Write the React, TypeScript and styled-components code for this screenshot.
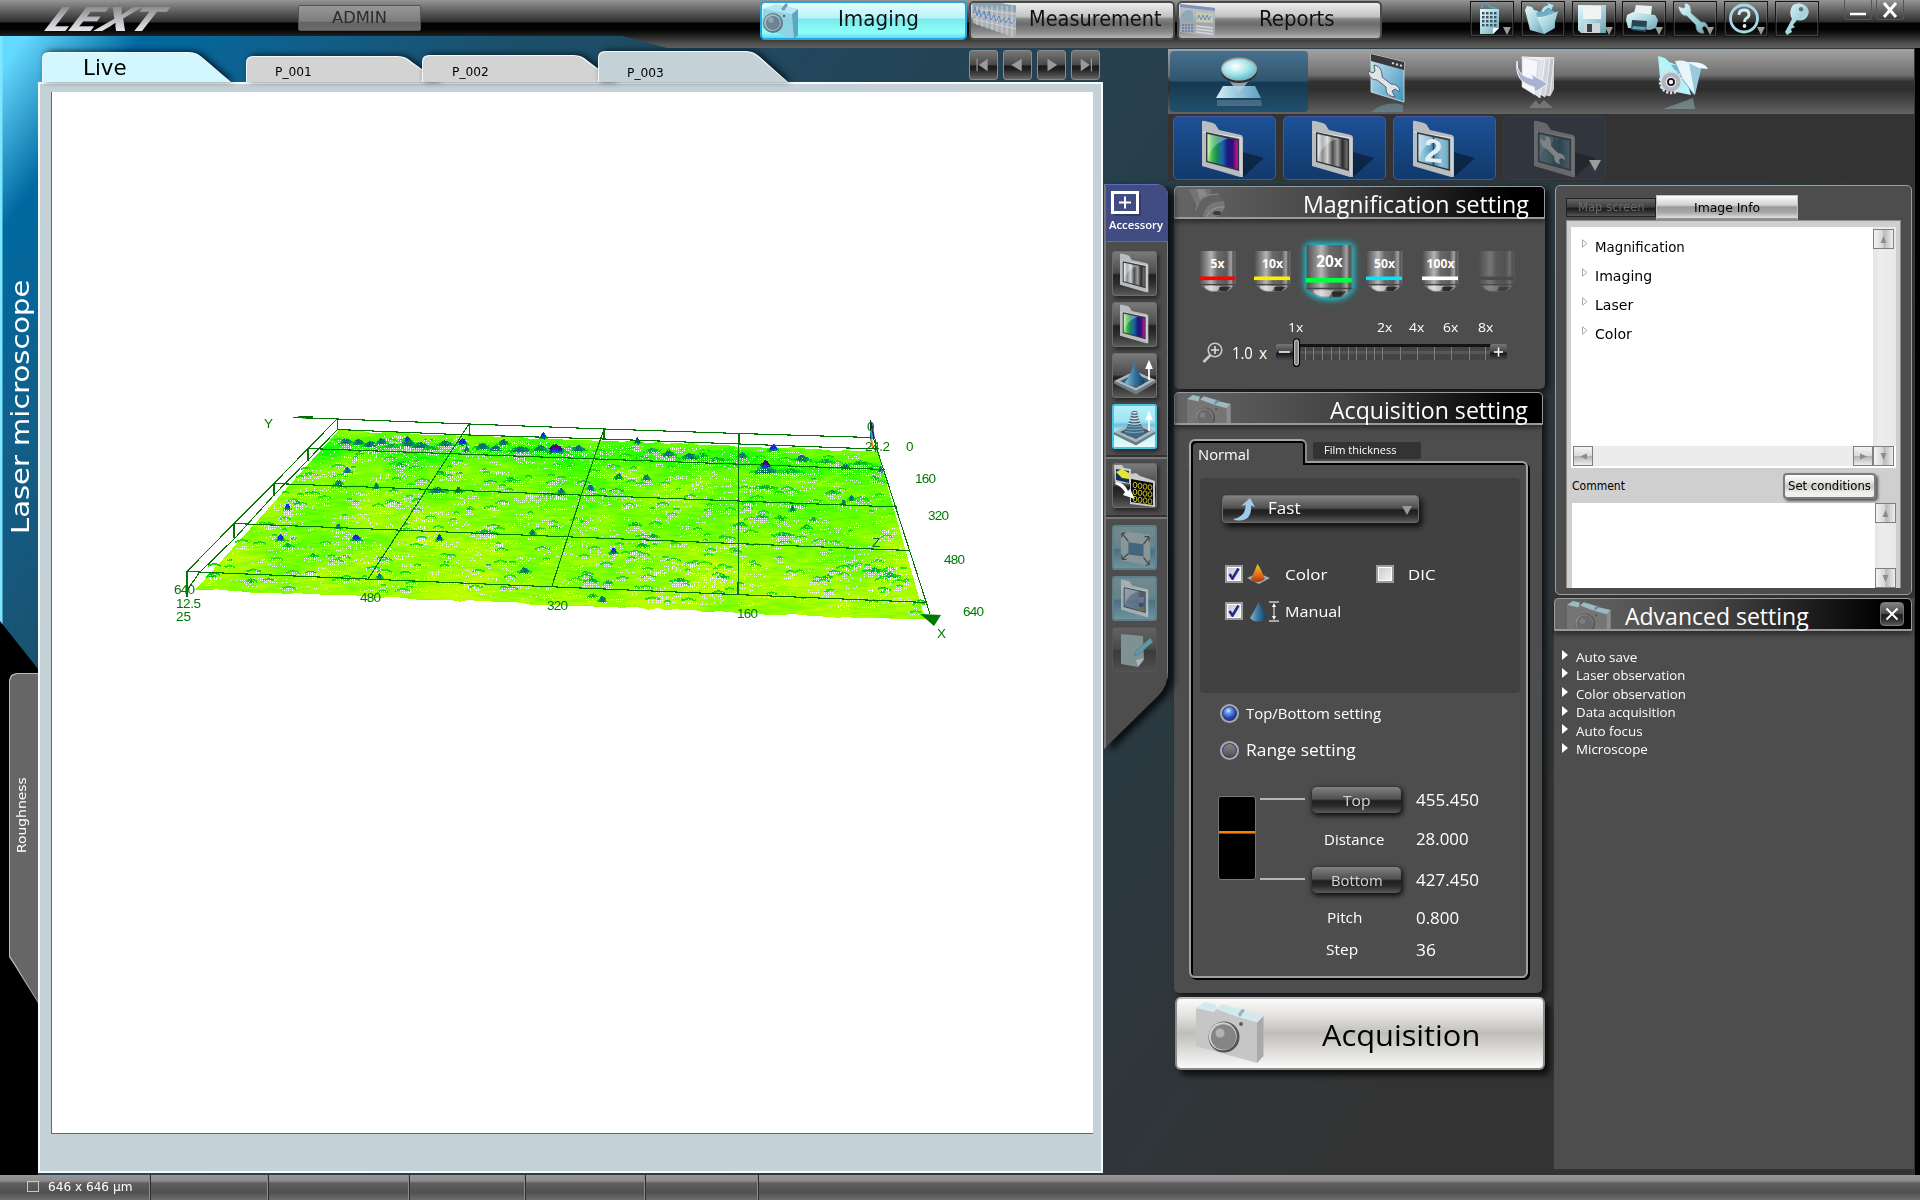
import React, { useEffect, useLayoutEffect, useRef, useState } from "react";
import styled, { createGlobalStyle, css } from "styled-components";

const segoe = `"Open Sans", "Noto Sans", sans-serif`;
const tahoma = `"DejaVu Sans Condensed", "DejaVu Sans", "Noto Sans", sans-serif`;

const GlobalStyle = createGlobalStyle`
  * { box-sizing: border-box; }
  body { margin: 0; background: #000; overflow: hidden; }
  svg { display: block; flex: none; }
`;

/* ---------- text that keeps a fixed run length ---------- */

const FitBox = styled.span<{ $w: number; $size: number; $font?: string; $color?: string; $vertical?: boolean; $weight?: number }>`
  display: inline-flex;
  flex: none;
  align-items: flex-start;
  width: ${(p) => (p.$vertical ? "auto" : p.$w + "px")};
  height: ${(p) => (p.$vertical ? p.$w + "px" : "auto")};
  font: ${(p) => p.$weight || 400} ${(p) => p.$size}px/1.2 ${(p) => p.$font || segoe};
  color: ${(p) => p.$color || "#fff"};
  white-space: nowrap;
  ${(p) => p.$vertical && css`writing-mode: vertical-rl; transform: rotate(180deg);`}
`;
const FitInner = styled.span`
  flex: none;
  transform-origin: 0 0;
`;

type FitProps = { w: number; size: number; font?: string; color?: string; vertical?: boolean; weight?: number; children: string };

function Fit({ w, size, font, color, vertical, weight, children }: FitProps) {
  const ref = useRef<HTMLSpanElement>(null);
  const [scale, setScale] = useState(1);
  useLayoutEffect(() => {
    const el = ref.current;
    if (!el) return;
    const natural = vertical ? el.offsetHeight : el.offsetWidth;
    if (natural) setScale(w / natural);
  }, [w, vertical, children]);
  return (
    <FitBox $w={w} $size={size} $font={font} $color={color} $vertical={vertical} $weight={weight}>
      <FitInner ref={ref} style={{ transform: vertical ? `scaleY(${scale})` : `scaleX(${scale})` }}>{children}</FitInner>
    </FitBox>
  );
}

/* ---------- shell ---------- */

const Screen = styled.div`
  width: 1920px;
  height: 1200px;
  display: flex;
  flex-direction: column;
  background: #000;
  overflow: hidden;
`;

const Header = styled.header`
  z-index: 2;
  flex: none;
  height: 48px;
  margin-bottom: -12px;
  display: flex;
  align-items: flex-start;
  background: linear-gradient(#959595 0, #5c5c5c 12px, #2e2e2e 22px, #000 23px, #050505 30px, #1c1c1c 35px, #4d4d4d 43px, #5e5e5e 48px);
  clip-path: polygon(0 0, 100% 0, 100% 48px, 667px 48px, 622px 36px, 0 36px);
`;

const Logo = styled.div`
  margin: 7px 0 0 43px;
  width: 255px;
  height: 25px;
  font: 800 33px/25px Inter, "Liberation Sans", sans-serif;
  font-style: italic;
  letter-spacing: -1px;
  transform: scaleX(1.36) skewX(-22deg);
  transform-origin: 0 100%;
  background: linear-gradient(#8d8d90, #e9e9ee);
  -webkit-background-clip: text;
  background-clip: text;
  color: transparent;
`;

const AdminTag = styled.div`
  width: 123px;
  height: 26px;
  margin: 5px 339px 0 0;
  border: 1px solid #555;
  border-radius: 2px;
  background: linear-gradient(#979797 0, #7d7d7d 64%, #636363 66%, #6b6b6b 100%);
  display: flex;
  justify-content: center;
  padding-top: 2px;
`;

const TopTabs = styled.nav`
  display: flex;
  gap: 2px;
  margin-top: 1px;
`;
const TopTab = styled.div<{ $active?: boolean; $w: number }>`
  width: ${(p) => p.$w}px;
  height: 39px;
  display: flex;
  justify-content: space-between;
  border-radius: 5px;
  overflow: hidden;
  border: 2px solid ${(p) => (p.$active ? "#2aa3dc" : "#4a4a4a")};
  background: ${(p) =>
    p.$active
      ? "linear-gradient(#e4fcff 0, #b8f4fc 42%, #7be8ea 46%, #86f6f4 65%, #8dfff8 85%, #5fd8f2 100%)"
      : "linear-gradient(#eee 0, #c4c4c4 38%, #848484 46%, #6c6c6c 60%, #888 82%, #b5b5b5 100%)"};
`;
const TopTabLabel = styled.div<{ $r: number }>`
  padding: 4px ${(p) => p.$r}px 0 0;
`;

const Tools = styled.div`
  display: flex;
  gap: 6.8px;
  margin: 1px 0 0 88px;
`;
const ToolButton = styled.div`
  position: relative;
  width: 44px;
  height: 36px;
  border: 1px solid #161616;
  outline: 1px solid rgba(150, 150, 150, 0.3);
  outline-offset: -2px;
  display: flex;
  justify-content: center;
  align-items: center;
  padding-right: 4px;
`;
const Caret = styled.i`
  position: absolute;
  right: 2px;
  bottom: 1px;
  border: 4px solid transparent;
  border-top: 8px solid #9b9b9b;
  border-bottom: 0;
`;
const WindowKeys = styled.div`
  display: flex;
  gap: 4px;
  margin-left: 25px;
`;
const WindowKey = styled.div`
  width: 28px;
  height: 20px;
  border: 1px solid #555;
  border-top: 0;
  border-radius: 0 0 3px 3px;
  display: flex;
  justify-content: center;
  align-items: center;
`;

const Main = styled.main`
  flex: none;
  height: 1139px;
  display: flex;
  background: linear-gradient(126deg, #64daff 20px, #56c6ef 36px, #0069a0 116px, #10608c 240px, #1c4f6a 420px, #23465a 700px, #27404c 950px, #2b3941 1350px, #333 1750px);
  border-right: 5px solid #000;
`;

const Rail = styled.aside`
  width: 38px;
  flex: none;
  display: flex;
  flex-direction: column;
  background: linear-gradient(90deg, #7fe6ff 0, #7fe6ff 2px, transparent 3px);
`;
const RailTop = styled.div`
  height: 585px;
  flex: none;
  padding: 244px 0 0 7px;
`;
const RailBottom = styled.div`
  flex: 1;
  background: #000;
  clip-path: polygon(0 0, 100% 48px, 100% 100%, 0 100%);
  padding: 52px 0 0 9px;
`;
const RoughTab = styled.div`
  height: 331px;
  background: #b9b9b9;
  clip-path: polygon(0 7px, 2px 2px, 7px 0, 100% 0, 100% 330px, 4px 290px, 0 284px);
  padding: 1px 0 0 1px;
`;
const RoughFace = styled.div`
  height: 329px;
  background: #666;
  clip-path: polygon(0 7px, 2px 2px, 7px 0, 100% 0, 100% 328px, 4px 288px, 0 282px);
  padding: 103px 0 0 5px;
`;

const Viewer = styled.section`
  width: 1065px;
  flex: none;
  display: flex;
  flex-direction: column;
`;
const TabStrip = styled.div`
  height: 46px;
  flex: none;
  display: flex;
  align-items: flex-end;
  padding-left: 4px;
`;
const tabPath = (w: number, h: number) =>
  `path("M0 ${h} V7 Q0 0 7 0 H${w - 42} Q${w - 34} 0 ${w - 28} 6 L${w} ${h} Z")`;
const TabShadow = styled.div<{ $ml?: number }>`
  margin-left: ${(p) => p.$ml || 0}px;
  filter: drop-shadow(3px -1px 3px rgba(0, 10, 20, 0.75));
`;
const TabEdge = styled.div<{ $w: number; $h: number }>`
  width: ${(p) => p.$w}px;
  height: ${(p) => p.$h}px;
  background: #f4f8f9;
  clip-path: ${(p) => tabPath(p.$w, p.$h)};
  padding-top: 1px;
`;
const TabFace = styled.div<{ $w: number; $h: number; $bg: string; $l: number; $t: number }>`
  width: ${(p) => p.$w - 1}px;
  height: ${(p) => p.$h - 1}px;
  margin-left: 1px;
  background: ${(p) => p.$bg};
  clip-path: ${(p) => tabPath(p.$w - 2, p.$h - 1)};
  padding: ${(p) => p.$t}px 0 0 ${(p) => p.$l}px;
`;
const Pager = styled.div`
  display: flex;
  gap: 5px;
  margin: 0 0 2px 181px;
`;
const PagerKey = styled.div`
  width: 29px;
  height: 30px;
  border: 1px solid #8b8b8b;
  border-radius: 3px;
  background: linear-gradient(#777 0, #4a4a4a 48%, #1b1b1b 54%, #222 66%, #666 100%);
  display: flex;
  align-items: center;
  justify-content: center;
`;
const Frame = styled.div`
  height: 1091px;
  flex: none;
  background: #c4d1d6;
  border: 2px solid #f6fafb;
  padding: 8px 8px 37px 11px;
`;
const Canvas3D = styled.div`
  position: relative;
  height: 1042px;
  background: #fff;
  border-left: 1px solid #5e6a6f;
  border-bottom: 1px solid #5e6a6f;
`;
const Surface = styled.canvas`
  position: absolute;
  left: 138px;
  top: 328px;
`;
const Axes = styled.svg`
  position: absolute;
  left: 107px;
  top: 308px;
`;

/* ---------- accessory rail ---------- */

const AccessoryColumn = styled.aside`
  width: 65px;
  flex: none;
  padding: 148px 0 0 1px;
  filter: drop-shadow(6px 3px 3px rgba(0, 0, 0, 0.75));
`;
const AccessoryShape = styled.div`
  width: 64px;
  height: 565px;
  background: #4d4d4d;
  clip-path: path("M0 565 V0 H54 Q64 2 64 12 V487 Q64 502 54 512 Z");
  display: flex;
  flex-direction: column;
  align-items: center;
  border-left: 2px solid #777;
  border-right: 1px solid #808080;
  padding-right: 4px;
`;
const AccessoryHead = styled.div`
  width: 64px;
  height: 58px;
  flex: none;
  margin: 0 -4px 9px 0;
  background: #414d82;
  border: 1px solid #5a6cc0;
  border-radius: 0 10px 0 0;
  display: flex;
  flex-direction: column;
  align-items: flex-start;
  padding: 6px 0 0 5px;
`;
const HeadCaption = styled.div`
  margin: -1px 0 0 -2px;
`;
const SideButton = styled.div<{ $kind?: "active" | "soft" | "dim" }>`
  width: 45px;
  height: 45px;
  flex: none;
  margin-bottom: 6px;
  border-radius: 3px;
  display: flex;
  align-items: center;
  justify-content: center;
  overflow: hidden;
  border: 1px solid #6c6c6c;
  background: linear-gradient(#7a7a7a 0, #4c4c4c 48%, #202020 54%, #303030 75%, #5a5a5a 100%);
  box-shadow: 2px 3px 4px rgba(0, 0, 0, 0.5);
  ${(p) => p.$kind === "active" && css`
    border: 2px solid #4cc4e4;
    background: linear-gradient(#b5f0fb 0, #9fe4f4 38%, #6dc0dc 46%, #b8effa 62%, #e6fdff 100%);
  `}
  ${(p) => p.$kind === "soft" && css`
    border: 2px solid #5f7f8b;
    background: linear-gradient(#708b90 0, #668389 50%, #4c7082 56%, #70949c 100%);
    box-shadow: none;
  `}
  ${(p) => p.$kind === "dim" && css`
    border-color: #555;
    background: linear-gradient(#626262 0, #4a4a4a 48%, #3a3a3a 54%, #505050 100%);
    box-shadow: none;
  `}
`;
const Groove = styled.hr<{ $top: number; $bottom: number }>`
  width: 61px;
  height: 4px;
  flex: none;
  margin: ${(p) => p.$top}px -4px ${(p) => p.$bottom}px 0;
  border: 0;
  border-top: 2px solid #333;
  border-bottom: 2px solid #777;
`;

/* ---------- right side ---------- */

const Right = styled.section`
  width: 746px;
  flex: none;
  padding-top: 13px;
  display: flex;
  flex-direction: column;
`;
const ModeBar = styled.div`
  height: 65px;
  flex: none;
  display: flex;
  gap: 10px;
  padding: 2px;
  background: linear-gradient(#a2a2a2 0, #6f6f6f 40%, #333 50%, #2e2e2e 62%, #4c4c4c 84%, #646464 100%);
`;
const Mode = styled.div<{ $on?: boolean }>`
  width: 138px;
  height: 61px;
  border-radius: 4px;
  display: flex;
  justify-content: center;
  align-items: center;
  padding-top: 2px;
  background: ${(p) => (p.$on ? "linear-gradient(#46708e 0, #31566f 48%, #16384f 52%, #22506e 100%)" : "none")};
`;
const PresetBar = styled.div`
  height: 67px;
  flex: none;
  display: flex;
  gap: 7px;
  padding: 2px 5px 0;
  background: #333;
`;
const Preset = styled.div<{ $off?: boolean; $l?: number }>`
  position: relative;
  width: 103px;
  height: 64px;
  border: 1px solid ${(p) => (p.$off ? "#363d4a" : "#4a55a0")};
  border-radius: 5px;
  background: ${(p) => (p.$off ? "#30353e" : "linear-gradient(#1d5096, #113a6c)")};
  padding: 3px 0 0 ${(p) => p.$l || 28}px;
`;
const PresetCaret = styled(Caret)`
  right: 4px;
  bottom: 8px;
  border-width: 6px;
  border-top-width: 11px;
  border-bottom: 0;
`;
const Columns = styled.div`
  flex: 1;
  display: flex;
  gap: 9px;
  padding-left: 6px;
`;
const LeftColumn = styled.div`
  width: 371px;
  flex: none;
  padding-top: 5px;
  display: flex;
  flex-direction: column;
`;
const RightColumn = styled.div`
  width: 360px;
  flex: none;
  padding: 4px 0 6px;
  display: flex;
  flex-direction: column;
`;

const Panel = styled.section<{ $h: number; $w: number; $mb: number }>`
  width: ${(p) => p.$w}px;
  height: ${(p) => p.$h}px;
  flex: none;
  margin-bottom: ${(p) => p.$mb}px;
  background: #4d4d4d;
  border-radius: 5px;
  box-shadow: 4px 3px 6px rgba(0, 0, 0, 0.65);
`;
const PanelHead = styled.div<{ $w: number; $l: number }>`
  width: ${(p) => p.$w}px;
  height: 33px;
  border: 1px solid #9a9a9a;
  border-bottom-width: 2px;
  border-radius: 5px 5px 1px 1px;
  background: linear-gradient(90deg, #666 0, #444 45%, #000 92%);
  box-shadow: 0 3px 5px rgba(0, 0, 0, 0.45);
  display: flex;
  padding-left: ${(p) => p.$l}px;
`;
const HeadPicture = styled.div<{ $w: number }>`
  width: ${(p) => p.$w}px;
  height: 30px;
  flex: none;
  overflow: hidden;
  padding-top: 2px;
`;
const HeadTitle = styled.div`
  margin-top: 4px;
`;

const Objectives = styled.div`
  height: 57px;
  margin: 24px 0 0 25px;
  display: grid;
  grid-template-columns: 55px 49px 63px 56px 56px 40px;
  align-items: center;
`;
const Active = styled.div`
  width: 53px;
  display: flex;
  justify-content: center;
  filter: drop-shadow(0 0 3px #1ec8d8) drop-shadow(0 0 3px #17b4c4);
`;
const ZoomLabels = styled.div`
  display: grid;
  grid-template-columns: 89px 32px 34px 35px 20px;
  margin: 18px 0 0 114px;
  height: 20px;
  align-items: center;
`;
const ZoomRow = styled.div`
  display: flex;
  align-items: center;
  height: 30px;
  margin: 0 0 0 28px;
`;
const Spacer = styled.span<{ $w: number }>`
  width: ${(p) => p.$w}px;
  flex: none;
`;

const Notebook = styled.div`
  margin: 14px 0 0 15px;
`;
const NotebookTabs = styled.div`
  display: flex;
  height: 22px;
`;
const NormalTab = styled.div`
  z-index: 1;
  width: 118px;
  height: 28px;
  border: 2px solid #a6a6a6;
  border-right-color: #8a8a8a;
  border-bottom: 0;
  border-radius: 6px 6px 0 0;
  background: #4d4d4d;
  box-shadow: inset 2px 2px 0 #000, inset -2px 0 0 #000;
  clip-path: polygon(0 0, 100% 0, 100% 24px, 114px 24px, 114px 28px, 0 28px);
  padding: 5px 0 0 7px;
`;
const FilmTab = styled.div`
  width: 108px;
  height: 17px;
  margin: 3px 0 0 6px;
  border-radius: 2px;
  background: #333;
  display: flex;
  align-items: center;
  padding: 0 0 2px 11px;
`;
const NotebookBody = styled.div`
  width: 339px;
  height: 517px;
  border: 2px solid #a0a0a0;
  border-radius: 0 6px 6px 6px;
  box-shadow: 2px 2px 0 #000, inset 2px 2px 0 #000;
  padding: 15px 0 0 9px;
`;
const ScanBox = styled.div`
  width: 320px;
  height: 215px;
  border-radius: 4px;
  background: #414141;
  padding: 17px 0 0 22px;
`;
const gloss = css`
  background: linear-gradient(#828282 0, #4f4f4f 46%, #1f1f1f 54%, #2a2a2a 72%, #585858 100%);
`;
const Dropdown = styled.div`
  width: 197px;
  height: 28px;
  border-radius: 4px;
  ${gloss}
  border: 1px solid #6a6a6a;
  box-shadow: 3px 4px 6px rgba(0, 0, 0, 0.8);
  display: flex;
  align-items: center;
  padding: 0 0 1px 9px;
  gap: 12px;
`;
const DropCaret = styled.i`
  margin: 4px 0 0 89px;
  border: 5px solid transparent;
  border-top: 9px solid #999;
  border-bottom: 0;
`;
const CheckRow = styled.div<{ $mt: number }>`
  display: flex;
  align-items: center;
  height: 20px;
  margin: ${(p) => p.$mt}px 0 0 3px;
`;
const Check = styled.div`
  width: 18px;
  height: 18px;
  border: 2px solid #9b9b9b;
  outline: 1px solid #fff;
  outline-offset: -3px;
  background: linear-gradient(135deg, #c5c5ce, #f6f6f6);
  display: flex;
  align-items: center;
  justify-content: center;
`;
const RadioRow = styled.div`
  height: 37px;
  display: flex;
  align-items: center;
  padding-left: 20px;
  gap: 7px;
`;
const Radios = styled.div`
  padding-top: 2px;
`;
const Radio = styled.div<{ $on?: boolean }>`
  width: 19px;
  height: 19px;
  border-radius: 50%;
  border: 2px solid #a9a9a9;
  background: ${(p) =>
    p.$on
      ? "radial-gradient(circle at 42% 32%, #d4f2ff 0, #6fa4ee 18%, #2a3fae 55%, #141c66 100%)"
      : "linear-gradient(#8b8584 0, #6a6464 60%, #4c4a4c 100%)"};
  box-shadow: inset 0 0 0 1px #2b3a77;
`;
const Measures = styled.div`
  display: grid;
  grid-template-columns: 42px 52px 89px 15px 70px;
  grid-template-rows: 40px 40px 40px 36px 30px;
  margin: 11px 0 0 18px;
  align-items: center;
`;
const Gauge = styled.div`
  grid-row: 1 / 4;
  grid-column: 1;
  align-self: start;
  width: 38px;
  height: 84px;
  margin-top: 16px;
  background: #000;
  border: 1px solid #777;
  border-radius: 3px;
  padding-top: 34px;
`;
const GaugeMark = styled.div`
  height: 3px;
  background: #ff7f00;
  border: 1px solid #8c4400;
  border-width: 0 0 1px;
`;
const Lead = styled.div<{ $row: number }>`
  grid-row: ${(p) => p.$row};
  grid-column: 2;
  width: 45px;
  height: 2px;
  margin-bottom: 3px;
  background: #b5b5b5;
`;
const Cell = styled.div<{ $row: number; $col: number; $l?: number; $b?: number }>`
  grid-row: ${(p) => p.$row};
  grid-column: ${(p) => p.$col};
  padding-left: ${(p) => p.$l || 0}px;
  padding-bottom: ${(p) => p.$b || 0}px;
  display: flex;
`;
const KeyButton = styled.div<{ $row: number }>`
  grid-row: ${(p) => p.$row};
  grid-column: 3;
  width: 89px;
  height: 26px;
  border-radius: 5px;
  ${gloss}
  box-shadow: 1px 2px 5px 1px rgba(0, 0, 0, 0.8);
  display: flex;
  justify-content: center;
  align-items: center;
  padding-top: 1px;
`;
const AcquireButton = styled.div`
  width: 370px;
  height: 73px;
  margin-left: 1px;
  flex: none;
  border-radius: 6px;
  border: 2px solid #8c8c8c;
  border-top-color: #bbb;
  background: linear-gradient(#fbfbfa 0, #e2e1df 25%, #c0beb9 50%, #dddcd9 75%, #fafaf9 100%);
  box-shadow: 5px 5px 6px rgba(0, 0, 0, 0.75);
  display: flex;
  padding: 3px 0 0 19px;
`;
const AcquireLabel = styled.div`
  margin: 15px 0 0 58px;
`;

/* image info */

const InfoPanel = styled.section`
  width: 357px;
  height: 410px;
  flex: none;
  margin: 0 0 3px 1px;
  border: 1px solid #9d9d9d;
  border-radius: 5px;
  background: #4d4d4d;
  padding: 9px 0 0 10px;
`;
const InfoTabs = styled.div`
  display: flex;
  height: 25px;
  align-items: center;
`;
const MapTab = styled.div`
  width: 90px;
  height: 19px;
  border: 1px solid #222;
  background: linear-gradient(#666 0, #3c3c3c 48%, #1a1a1a 54%, #2a2a2a 70%, #555 100%);
  display: flex;
  align-items: center;
  justify-content: center;
  padding-bottom: 3px;
`;
const InfoTab = styled.div`
  width: 142px;
  height: 25px;
  background: linear-gradient(#fff 0, #cfcfcf 42%, #999 50%, #a8a8a8 75%, #e0e0e0 100%);
  border: 1px solid #c0c0c8;
  border-bottom: 2px solid #8f8f98;
  display: flex;
  align-items: center;
  justify-content: center;
`;
const InfoBody = styled.div`
  width: 335px;
  height: 368px;
  background: #cfcfcf;
  border: 1px solid #8c8c8c;
  border-bottom: 0;
  padding: 6px 0 0 4px;
`;
const TreeArea = styled.div`
  width: 325px;
  height: 241px;
  background: #fff;
  display: grid;
  grid-template-columns: 302px 23px;
  grid-template-rows: 219px 22px;
`;
const TreeList = styled.div`
  padding: 6px 0 0 11px;
`;
const TreeRow = styled.div`
  height: 29px;
  display: flex;
  align-items: center;
  gap: 7px;
`;
const TreeGlyph = styled.div`
  height: 17px;
`;
const VTrack = styled.div<{ $h?: number }>`
  height: ${(p) => (p.$h ? p.$h + "px" : "auto")};
  background: linear-gradient(90deg, #e4e4e4, #ededed 30%, #e8e8e8);
  display: flex;
  flex-direction: column;
  justify-content: space-between;
  padding-top: ${(p) => (p.$h ? 0 : 2)}px;
`;
const HTrack = styled.div`
  margin-left: 2px;
  height: 20px;
  background: #ececec;
  display: flex;
  justify-content: space-between;
`;
const ScrollKey = styled.div<{ $flat?: boolean }>`
  width: ${(p) => (p.$flat ? 20 : 21)}px;
  height: 20px;
  border: 1px solid #7f7f7f;
  background: ${(p) =>
    p.$flat
      ? "linear-gradient(#f4f4f4 0, #dadada 48%, #b4b4b4 52%, #ededed 100%)"
      : "linear-gradient(90deg, #f4f4f4 0, #d6d6d6 46%, #b8b8b8 52%, #eee 100%)"};
  display: flex;
  justify-content: center;
  align-items: center;
`;
const CommentRow = styled.div`
  height: 35px;
  width: 325px;
  display: flex;
  justify-content: space-between;
  align-items: center;
  padding: 1px 20px 0 1px;
`;
const SetButton = styled.div`
  width: 93px;
  height: 26px;
  border: 2px solid #7b7b7b;
  border-radius: 4px;
  background: linear-gradient(#fff 0, #e9e8e7 30%, #c9c7c4 50%, #efefee 80%);
  box-shadow: 2px 2px 3px rgba(0, 0, 0, 0.6);
  display: flex;
  align-items: center;
  justify-content: center;
  padding-bottom: 2px;
`;
const CommentBox = styled.div`
  width: 324px;
  height: 85px;
  margin-left: 1px;
  background: #fff;
  display: flex;
  justify-content: flex-end;
`;

const AdvancedPanel = styled.section`
  flex: 1;
  background: #4d4d4d;
`;
const CloseKey = styled.div`
  width: 24px;
  height: 24px;
  margin: 3px 0 0 71px;
  border: 1px solid #757575;
  border-radius: 4px;
  ${gloss}
  display: flex;
  align-items: center;
  justify-content: center;
`;
const AdvancedList = styled.div`
  padding: 17px 0 0 8px;
`;
const AdvancedRow = styled.div`
  height: 18.6px;
  display: flex;
  align-items: center;
  gap: 8px;
`;
const Tri = styled.i`
  height: 0;
  border: 5px solid transparent;
  border-left: 6px solid #fff;
  border-right: 0;
  margin-bottom: 5px;
`;

const Status = styled.footer`
  height: 25px;
  flex: none;
  display: flex;
  background: linear-gradient(#9a9698 0, #8f8b8d 22%, #5e5e5e 34%, #505050 70%, #6d6d6d 100%);
`;
const StatusCell = styled.div<{ $w: number }>`
  width: ${(p) => p.$w}px;
  border-right: 1px solid #2e2e2e;
  box-shadow: inset -1px 0 0 #8a8a8a;
  display: flex;
  align-items: center;
  gap: 9px;
  padding: 0 0 2px 27px;
`;
const StatusSquare = styled.i`
  width: 12px;
  height: 11px;
  border: 1px solid #c8c8c8;
`;

/* ---------- drawings ---------- */

function Camera({ w = 68, tone = "light" }: { w?: number; tone?: "light" | "dark" }) {
  const c = {
    light: ["#c6c6c6", "#a8aaaa", "#d3e9ee", "#8db4c4", "#858585", "#d0d0d0"],
    dark: ["#757575", "#8d8d8d", "#9dbac2", "#6c8e99", "#6a6a6a", "#8a8a8a"],
  }[tone];
  return (
    <svg width={w} height={(w * 62) / 68} viewBox="0 0 68 62">
      <path d="M0 6 L18 10 20 7 42 14 61 20 61 61 0 44Z" fill={c[0]} />
      <path d="M61 20 L67.500 14 V54 L61 61Z" fill={c[1]} />
      <path d="M0 6 L9 0 20 2.500 18 10Z M20 7 L26 2 47 8 42 15Z M42 15 L49 9.500 67.500 14 61 20.500Z" fill={c[2]} />
      <path d="M42 12 L46 7 49 8 44 15Z" fill={c[3]} />
      <ellipse cx="28" cy="35" rx="15.500" ry="15.500" fill="#555" />
      <ellipse cx="26.800" cy="34.300" rx="14" ry="14" fill={c[5]} />
      <ellipse cx="27.500" cy="35" rx="12.600" ry="12.800" fill={c[4]} />
      <ellipse cx="24" cy="31" rx="4.500" ry="4.500" fill={c[5]} opacity=".6" />
      <circle cx="45" cy="22" r="1.900" fill="#5b5b5b" />
    </svg>
  );
}

function BlueCamera() {
  return (
    <svg width="38" height="36" viewBox="0 0 38 36">
      <path d="M1 6 L14 3 30 11 36 6 36 32 32 36 1 25Z" fill="#8fcfe2" opacity=".9" />
      <path d="M1 6 L14 1 36 6 30 11Z" fill="#b5e7f2" />
      <path d="M30 11 L36 6 V32 L32 36Z" fill="#5ba6c2" />
      <path d="M19 6 L24 0 26 2 22 8Z" fill="#6f9fb5" />
      <circle cx="11" cy="20" r="10" fill="#5a7786" />
      <circle cx="10.500" cy="19.500" r="8.600" fill="#a5b9c2" />
      <circle cx="11" cy="20" r="7" fill="#6b8494" />
      <circle cx="9" cy="17" r="2.700" fill="#8ea8b6" />
      <circle cx="22" cy="13" r="1.200" fill="#46606e" />
    </svg>
  );
}

function ChartIcon() {
  return (
    <svg width="46" height="36" viewBox="0 0 46 36">
      <path d="M1 1 L45 2 45 35 2 20Z" fill="#a9afb4" />
      <path d="M2 0 H30 L45 3 V9 L2 3Z" fill="#8aa5b3" />
      {[6, 11, 16, 21, 26, 31, 36, 41].map((x) => (
        <path key={x} d={`M${x} 3 V${20 + x * 0.34}`} stroke="#cfd2d6" />
      ))}
      {[6, 11, 16].map((y) => (
        <path key={y} d={`M2 ${y} L45 ${y * 1.5 + 2}`} stroke="#cfd2d6" />
      ))}
      <path d="M2 10 L4 4 6 13 8 6 10 14 13 8 15 16 18 8 20 17 23 12 25 18 28 13 30 19 33 15 35 20 38 15 40 21 44 17" fill="none" stroke="#5b86c8" />
    </svg>
  );
}

function ReportIcon() {
  return (
    <svg width="38" height="36" viewBox="0 0 38 36">
      <path d="M1 1 L36 5 36 35 1 29Z" fill="#b0b5bd" opacity=".8" />
      <path d="M1 1 L36 5 V8 L1 4Z" fill="#8090c0" />
      <path d="M2 19 V12 Q8 4 14 9 V19Z" fill="#90a9b4" />
      <path d="M17 9 L34 11 V20 L17 19Z" fill="#c6cbb0" />
      <path d="M18 16 l2 -4 2 5 2 -5 2 5 2 -5 2 5 2 -4" fill="none" stroke="#6b8ec0" />
      {[0, 1, 2].map((r) => [0, 1, 2, 3].map((q) => <rect key={`${r}${q}`} x={3 + q * 3} y={21 + r * 3} width="2" height="2" fill="#6f86b0" />))}
      <path d="M17 23 l17 2 M17 26 l17 2 M17 29 l17 2" stroke="#d6d8da" strokeWidth="1.500" />
    </svg>
  );
}

const ice = "#a6d9e4";
function ToolIcon({ kind }: { kind: string }) {
  return (
    <svg width="34" height="34" viewBox="0 0 34 34">
      <defs>
        <linearGradient id={"ti" + kind} x1="0" y1="0" x2="1" y2="1">
          <stop offset="0" stopColor="#e8f9fc" />
          <stop offset=".55" stopColor="#a4d2dd" />
          <stop offset="1" stopColor={kind === "key" ? "#d5e6ea" : "#6ba0b0"} />
        </linearGradient>
      </defs>
      <g fill={`url(#ti${kind})`}>
        {kind === "table" && (
          <>
            <path d="M7 7 H26 V26 L20 32 H7Z" />
            <path d="M20 32 V26 H26Z" fill="#fff" />
            <path d="M9 6 Q8 -1 14 1 Q17 7 24 6" fill="none" stroke="#5b9bb5" strokeWidth="1.800" />
            {[10, 14, 18, 22].map((y) => [9, 13, 17, 21].map((x) => <rect key={`${x}${y}`} x={x} y={y} width="2.500" height="2.400" fill="#3a5560" />))}
          </>
        )}
        {kind === "folder" && (
          <>
            <path d="M1 8 L3 4 8 5 10 8 14 9 20 32 6 28Z" />
            <path d="M12 11 L24 6 31 10 31 26 20 32Z" fill="#6fb0c4" />
            <path d="M20 32 L13 15 Q23 15 34 9 L29 27Z" />
            <path d="M17 10 Q18 4 24 3 L22 0 L30 3 L27 9 L25 6 Q21 7 20 11Z" fill="#b9e2ec" stroke="#3c7486" strokeWidth=".5" />
          </>
        )}
        {kind === "save" && (
          <>
            <path d="M3 3 H31 V31 H6 L3 28Z" />
            <rect x="8" y="4" width="18" height="13" fill="#f0f4f5" />
            <rect x="9" y="21" width="16" height="10" fill="#cfd5d8" />
            <rect x="12" y="22" width="5" height="8" fill="#2f444d" />
          </>
        )}
        {kind === "print" && (
          <>
            <path d="M11 3 L27 4 26 13 9 11Z" fill="#e9f1f3" />
            <path d="M2 13 L8 10 30 13 33 18 31 26 25 28 3 26 1 18Z" />
            <path d="M7 18 L22 19 21 30 6 28Z" fill="#27444f" />
            <path d="M8 24 L21 25 20 28 7 27Z" fill="#5aa7b7" />
          </>
        )}
        {kind === "wrench" && (
          <path d="M2 4 L7 6 9 5 8 1 Q15 1 15 8 L15 11 25 20 Q31 19 32 26 L28 24 26 26 28 31 Q21 32 20 25 L20 23 11 14 Q4 14 2 4Z" stroke="#6d8f98" strokeWidth=".8" />
        )}
        {kind === "help" && (
          <>
            <circle cx="17" cy="16.500" r="13.500" fill="none" stroke={ice} strokeWidth="2.800" />
            <path d="M12 13 Q12 8 17 8 Q22 8 22 12.500 Q22 15 19 16.500 Q17.500 17.500 17.500 20" fill="none" stroke="#d3eef3" strokeWidth="2.800" />
            <circle cx="17.500" cy="24" r="1.900" fill="#d3eef3" />
          </>
        )}
        {kind === "key" && (
          <path d="M15 3 Q22 -1 28 4 Q33 9 29 15 Q25 20 19 18 L15 23 17 25 13 27 14 30 9 33 7 30 14 17 Q10 9 15 3Z M23 5 a2.200 2.200 0 1 0 .1 0Z" fillRule="evenodd" />
        )}
      </g>
    </svg>
  );
}

function MicroscopeIcon() {
  return (
    <svg width="50" height="52" viewBox="0 0 50 52">
      <defs>
        <radialGradient id="lens" cx=".4" cy=".35" r=".75">
          <stop offset="0" stopColor="#fff" />
          <stop offset=".5" stopColor="#a8e6ec" />
          <stop offset="1" stopColor="#4fb3c0" />
        </radialGradient>
        <linearGradient id="stage" x1="0" x2="1">
          <stop offset="0" stopColor="#d4ecf6" />
          <stop offset="1" stopColor="#5c9fc0" />
        </linearGradient>
      </defs>
      <path d="M9 29 H41 L47 41 H2Z" fill="url(#stage)" />
      <path d="M3 43 H47 L48 49 H3Z" fill="#7fa2b4" opacity=".4" />
      <path d="M12 20 L25 36 38 20Z" fill="#b9cfe0" opacity=".7" />
      <ellipse cx="25" cy="14" rx="18" ry="12" fill="#2e2e30" />
      <ellipse cx="25" cy="12" rx="18" ry="11.500" fill="#a5a5a5" />
      <ellipse cx="25" cy="12.500" rx="16.800" ry="10.300" fill="url(#lens)" />
    </svg>
  );
}

function SettingsWindowIcon() {
  return (
    <svg width="42" height="60" viewBox="0 0 42 60">
      <defs>
        <linearGradient id="sw" x1="0" y1="0" x2="1" y2="1">
          <stop offset="0" stopColor="#c9e9f3" />
          <stop offset="1" stopColor="#3d92bc" />
        </linearGradient>
      </defs>
      <path d="M5 1 L38 9 V49 L5 39Z" fill="url(#sw)" stroke="#dfe8ec" strokeWidth=".8" />
      <path d="M5 1 L38 9 V17 L5 8Z" fill="#39393c" />
      <path d="M26 10 l2 .6 M30 11.200 l2 .6 M34 12.300 l2 .6" stroke="#ddd" strokeWidth="2" />
      <path d="M2 18 L7 20 9 18 8 12 Q15 13 16 21 L16 24 25 31 Q33 31 34 39 L29 36 26 38 29 44 Q20 43 20 36 L20 34 11 27 Q3 27 2 18Z" fill="#dfe4e8" stroke="#59666e" />
      <path d="M5 59 Q20 47 37 52 V59Z" fill="#6e9ea8" opacity=".5" />
    </svg>
  );
}

function PagesIcon() {
  return (
    <svg width="44" height="56" viewBox="0 0 44 56">
      <path d="M9 2 H41 V34 L38 40 9 30Z" fill="#c6c7cf" />
      <path d="M9 2 L41 3 37 41 26 38Z" fill="#c2c3cc" stroke="#fff" strokeWidth=".7" />
      <path d="M9 2 L37 4 32 42 22 36Z" fill="#d2d3db" stroke="#fff" strokeWidth=".7" />
      <path d="M9 2 L32 5 27 43 16 35Z" fill="#e2e2ea" stroke="#fff" strokeWidth=".7" />
      <path d="M9 2 L25 6 22 40 9 32Z" fill="#f6f6fb" stroke="#c8c8d0" strokeWidth=".6" />
      <path d="M4 6 Q3 21 20 24 L18 19 L35 29 L22 37 L21 32 Q1 27 4 6Z" fill="#a9b2cf" stroke="#eef0f8" />
      <path d="M16 53 L23 45 26 50 31 45 40 53Z" fill="#9a9aa2" opacity=".5" />
    </svg>
  );
}

function FolderGearIcon() {
  return (
    <svg width="52" height="56" viewBox="0 0 52 56">
      <path d="M1 1 L8 3 12 7 26 12 34 40 4 34Z" fill="#b5f4f8" />
      <path d="M14 10 L44 8 37 40Z" fill="#73b4d0" />
      <path d="M18 6 Q28 4 36 10 L38 40 L26 24Z" fill="#e6f6fb" />
      <path d="M32 8 L45 10 L38 40Z" fill="#9cc8de" />
      <path d="M30 7 Q48 6 51 14 L42 13Z" fill="#eefafe" />
      <circle cx="14" cy="27" r="10.500" fill="none" stroke="#dcdce2" strokeWidth="3.600" strokeDasharray="2.200 1.600" />
      <circle cx="14" cy="27" r="9.500" fill="#b0b5c0" />
      <circle cx="14" cy="27" r="4.600" fill="#111" stroke="#f1f1f1" strokeWidth="1.300" />
      <circle cx="14" cy="27" r="2.200" fill="#eee" />
      <path d="M6 54 L36 43 38 54Z" fill="#8cb4b8" opacity=".5" />
    </svg>
  );
}

type Fill = "color" | "gray" | "two" | "wrench" | "panel";
let folderCount = 0;
function FolderFrame({ fill, w = 42, shade = true, dim = false }: { fill: Fill; w?: number; shade?: boolean; dim?: boolean }) {
  const [id] = useState(() => "ff" + folderCount++);
  const stops: Record<Fill, string[]> = {
    color: ["#b6ee90", "#3ab84c", "#16885a", "#1a64a8", "#1c1c80", "#2c1080", "#d4108c"],
    gray: ["#ececec", "#8c8c8c", "#d2d2d2", "#4c4c4c", "#a0a0a0", "#2a2a2a", "#777"],
    two: ["#a9d3e6", "#7db6d0", "#4b87a8", "#8dbfd6", "#6ea8c4"],
    wrench: ["#4a606c", "#40565f", "#2e444f", "#465a64"],
    panel: ["#6f7c90", "#5b687e"],
  };
  const list = stops[fill];
  const span = shade ? 63 : 42;
  const off = fill === "wrench";
  return (
    <svg width={(w * span) / 42} height={(w * 58) / 42} viewBox={`0 0 ${span} 58`} opacity={dim ? 0.75 : 1}>
      <defs>
        <linearGradient id={id}>
          {list.map((s, i) => (
            <stop key={i} offset={i / (list.length - 1)} stopColor={s} />
          ))}
        </linearGradient>
      </defs>
      {shade && <path d="M41 57 L62 38 41 32Z" fill="#000" opacity={off ? 0.25 : 0.4} />}
      <path d="M0 2 Q0 0 3 1 L11 3 Q14 4 15 7 L17 10 39 15 Q41 16 41 18 V57 L38 57 0 46Z" fill={off ? "#66686a" : "#b9bcc0"} />
      <path d="M1 12 L39 18 V55" fill="none" stroke={off ? "#787a7c" : "#e4e6e8"} />
      <path d="M4 12 L37 19 V51 L4 42Z" fill="#33383c" />
      <path d="M5.500 14 L35.500 20.500 V49 L5.500 41Z" fill={`url(#${id})`} />
      <path d="M5.500 14 L26 18.500 Q9 24 5.500 40Z" fill="#fff" opacity={off ? 0.06 : 0.32} />
      {(fill === "two" || off) && <path d="M20.500 17 V45" stroke="#2a4350" strokeWidth="1.500" />}
      {fill === "two" && (
        <text x="11" y="43" fontFamily="Liberation Sans, sans-serif" fontWeight="700" fontSize="33" fill="#e2f0f5" transform="skewY(6) translate(0,-3)">2</text>
      )}
      {off && (
        <path d="M6 18 L10 21 12 19 11 16 Q17 17 17 23 L17 26 24 33 Q31 34 31 40 L27 38 25 40 26 44 Q20 43 20 37 L20 36 13 29 Q6 28 6 18Z" fill="#7e8284" />
      )}
      {fill === "panel" && (
        <>
          <rect x="27" y="20" width="7" height="7" fill="#4c4f52" />
          <rect x="27" y="28" width="7" height="7" fill="#7a6ca8" />
          <rect x="27" y="36" width="7" height="6" fill="#2c4a58" />
          <rect x="27" y="43" width="7" height="5" fill="#6b6a34" />
        </>
      )}
    </svg>
  );
}

function ConeIcon({ layered }: { layered?: boolean }) {
  return (
    <svg width="42" height="40" viewBox="0 0 42 40">
      <defs>
        <linearGradient id="coneBlue">
          <stop offset="0" stopColor="#7fb6d6" />
          <stop offset=".5" stopColor="#34739c" />
          <stop offset="1" stopColor="#123a58" />
        </linearGradient>
      </defs>
      <path d="M0 25 L21 15 42 24 22 35Z" fill="#a9b8c0" />
      <path d="M0 25 L22 35 42 24 V26.500 L22 38.500 0 27.500Z" fill="#6f7c84" />
      <path d="M6 25 L21 18 36 24 22 32Z" fill="#3d5b6c" />
      <path d={layered ? "M18 4 H23 Q25 16 31 24 Q30 30 21 30 Q12 30 10 25 Q15 17 18 4Z" : "M20.500 5 Q24 18 31 25 Q30 30 21 30 Q12 30 11 26 Q17 19 20.500 5Z"} fill={layered ? "#456a80" : "url(#coneBlue)"} />
      {layered &&
        [5, 7.8, 10.6, 13.4, 16.2, 19, 21.8, 24.6].map((y, i) => (
          <path key={y} d={`M${18.3 - i * 1.05} ${y} Q20.500 ${y + 2} ${22.7 + i * 1.05} ${y}`} fill="none" stroke={i < 5 ? "#dfe7ea" : "#7fb3d0"} strokeWidth={i < 5 ? 1.2 : 0.9} />
        ))}
      <path d="M35 24 V10 M35 6 l-2.500 6 h5Z" stroke="#fff" strokeWidth="1.800" fill="#fff" />
    </svg>
  );
}

function FilmIcon() {
  return (
    <svg width="42" height="43" viewBox="0 0 42 43">
      <path d="M0 1 L8 1 10 4 17 5 V20 L1 18Z" fill="#c9ccce" />
      <path d="M2 5 L15 7 V19 L2 16Z" fill="#14305c" />
      <path d="M2 8 L8 5 15 9 V15 L8 14Z" fill="#e7e436" />
      <path d="M16 10 L22 9 26 12 41 17 V43 L16 40Z" fill="#c9ccce" />
      <path d="M17 15 L39 19 V41 L17 38Z" fill="#080808" />
      {[0, 1, 2].map((r) => [0, 1, 2, 3].map((c) => <ellipse key={`${r}${c}`} cx={21 + c * 5} cy={21 + r * 7 + c * 0.8} rx="1.900" ry="2.700" fill="none" stroke="#c4c022" />))}
      <path d="M1 20 Q7 22 11 28 L9 31 L21 35 L16 25 L14 27 Q10 18 2 18Z" fill="#fff" />
    </svg>
  );
}

function ExpandIcon() {
  return (
    <svg width="34" height="40" viewBox="0 0 36 40">
      <path d="M3 2 L34 6 V39 L3 33Z" fill="#889699" />
      <path d="M11 14 L27 16 V29 L11 27Z" fill="#43667a" />
      <path d="M4 4 L11 13 M33 8 L27 16 M4 32 L11 26 M33 38 L27 30 M4 4 v5 M4 4 h4 M33 8 v5 M33 8 h-5 M4 32 v-5 M4 32 h5 M33 38 v-5 M33 38 h-4" stroke="#40474a" strokeWidth="1.300" />
    </svg>
  );
}

function NoteIcon() {
  return (
    <svg width="38" height="38" viewBox="0 0 38 38">
      <path d="M5 3 L27 5 28 29 22 36 5 33Z" fill="#7f9193" />
      <path d="M28 27 L22 36 20 29Z" fill="#a9b6b7" />
      <path d="M34 7 L37 11 23 23 18 25 20 20Z" fill="#5f9aa4" stroke="#49757e" strokeWidth=".6" />
    </svg>
  );
}

function Objective({ label, band, big, dim }: { label?: string; band: string; big?: boolean; dim?: boolean }) {
  const id = "ob" + (label || "none");
  return (
    <svg width={big ? 47 : 37} height={big ? 53 : 41} viewBox="0 0 37 41" preserveAspectRatio="none" opacity={dim ? 0.4 : 1}>
      <defs>
        <linearGradient id={id}>
          <stop offset="0" stopColor="#4f4f4f" />
          <stop offset=".2" stopColor="#8a8a8a" />
          <stop offset=".32" stopColor="#b5b5b5" />
          <stop offset=".5" stopColor="#6a6a6a" />
          <stop offset=".75" stopColor="#5a5a5a" />
          <stop offset=".88" stopColor="#a5a5a5" />
          <stop offset=".93" stopColor="#555" />
          <stop offset="1" stopColor="#707070" />
        </linearGradient>
      </defs>
      <rect x=".5" y="0" width="36" height="34" fill={`url(#${id})`} />
      <path d="M.5 34 H36.500 L31 38.500 Q28 41 20 41 Q10 41 7 38.500Z" fill={`url(#${id})`} />
      <path d="M6 35 H22 L18 40 Q10 40 6 37Z" fill="#fff" opacity=".55" />
      <path d="M20 36 H32 L27 40 H21Z" fill="#000" opacity=".55" />
      <path d="M.5 33.500 H36.500" stroke="#444" />
      <rect x="0" y="25.500" width="36" height="3.600" fill={band} />
      {label && (
        <text x="18.500" y={big ? 17 : 16.5} textAnchor="middle" fontFamily="Open Sans, Noto Sans, sans-serif" fontWeight="700" fontSize="12" fill="#fff" textLength={label.length > 3 ? 28 : label.length > 2 ? 21 : 14} lengthAdjust="spacingAndGlyphs">
          {label}
        </text>
      )}
    </svg>
  );
}

function ObjectiveHead() {
  return (
    <svg width="46" height="30" viewBox="0 0 46 30">
      <path d="M4 -2 H28 L26 6 14 20Z" fill="#757575" />
      <path d="M12 -2 H19 L23 6 17 14Z" fill="#969696" opacity=".6" />
      <path d="M12 20 Q15 4 34 5 L40 12 Q24 12 20 28Z" fill="#626262" />
      <path d="M12 21 Q15 4 35 5" fill="none" stroke="#8c8c8c" />
      <path d="M19 27 Q22 12 40 12 L41 18 Q38 25 32 28 L22 28Z" fill="#777" />
      <path d="M22 28 Q28 17 40 18" stroke="#999" fill="none" />
      <ellipse cx="33" cy="24" rx="4" ry="2" fill="#3a3a3a" />
    </svg>
  );
}

function SliderDrawing() {
  const ticks = [29, 37, 46, 55, 63, 72, 80, 90, 98, 106, 124, 141, 158, 175, 193, 209];
  return (
    <svg width="232" height="30" viewBox="0 0 232 30">
      <defs>
        <linearGradient id="cap" x1="0" x2="0" y1="0" y2="1">
          <stop offset="0" stopColor="#777" />
          <stop offset=".5" stopColor="#444" />
          <stop offset=".56" stopColor="#181818" />
          <stop offset="1" stopColor="#4a4a4a" />
        </linearGradient>
      </defs>
      <rect x="22" y="6" width="193" height="16" fill="#454545" />
      <rect x="22" y="6" width="193" height="3" fill="#141414" />
      <rect x="22" y="13" width="193" height="3" fill="#575757" />
      {ticks.map((t) => (
        <path key={t} d={`M${t + 0.5} 9 V22`} stroke="#7d7d7d" />
      ))}
      <rect x="0" y="6" width="18" height="16" rx="2" fill="url(#cap)" />
      <rect x="214" y="6" width="17" height="16" rx="2" fill="url(#cap)" />
      <path d="M3 14 H14 M218 14 H227 M222.500 9.500 V18.500" stroke="#fff" strokeWidth="1.500" />
      <rect x="17.500" y=".8" width="6" height="27.500" rx="3" fill="#7c7c7c" stroke="#000" strokeWidth="1.200" />
      <rect x="18.700" y="2" width="3.600" height="25" rx="1.800" fill="none" stroke="#ddd" strokeWidth=".9" />
    </svg>
  );
}

const Arrow = ({ d, c = "#8b8b8b" }: { d: string; c?: string }) => (
  <svg width="9" height="9" viewBox="0 0 9 9">
    <path d={d} fill={c} />
  </svg>
);
const UP = "M4.500 1 L7.500 8 H1.500Z";
const DOWN = "M4.500 8 L7.500 1 H1.500Z";
const LEFT = "M1 4.500 L8 1.500 V7.500Z";
const RIGHT = "M8 4.500 L1 1.500 V7.500Z";

/* ---------- height map ---------- */

const PEAKS: [number, number, number, number][] = [
  [346, 442, 8, 1], [358, 443, 8, 1], [370, 445, 10, 1], [381, 442, 7, 1], [392, 446, 12, 0], [407, 441, 5, 2], [408, 444, 10, 1], [420, 446, 12, 1], [432, 448, 10, 0], [445, 444, 9, 1], [462, 443, 6, 2], [466, 450, 4, 1],
  [482, 447, 10, 1], [495, 449, 8, 1], [520, 450, 14, 1],
  [543, 437, 4, 2], [555, 451, 13, 3], [540, 449, 9, 1], [503, 443, 7, 1], [401, 464, 5, 0], [359, 453, 4, 0], [347, 471, 5, 1], [338, 483, 5, 1],
  [287, 508, 4, 2], [297, 502, 4, 0], [376, 487, 4, 1], [441, 473, 5, 0], [437, 491, 11, 1], [458, 491, 6, 1], [560, 493, 7, 1], [510, 479, 5, 0],
  [280, 539, 5, 2], [287, 545, 5, 0], [356, 539, 6, 2], [439, 539, 4, 2], [338, 527, 4, 1], [379, 577, 4, 1], [313, 555, 5, 0],
  [470, 508, 4, 0], [532, 533, 4, 1], [524, 571, 7, 1], [485, 532, 14, 0], [251, 580, 5, 0], [211, 575, 5, 0],
  [637, 442, 4, 2], [668, 454, 8, 1], [652, 450, 9, 0], [690, 457, 12, 1], [715, 459, 14, 0], [578, 449, 9, 1], [742, 456, 6, 1], [773, 449, 6, 2], [765, 471, 16, 1], [765, 467, 8, 3], [790, 471, 14, 0],
  [802, 459, 10, 1], [825, 461, 10, 0], [860, 463, 12, 0], [618, 477, 5, 1], [646, 478, 5, 1], [590, 488, 5, 1], [561, 492, 5, 1], [702, 455, 8, 0], [845, 467, 6, 1],
  [832, 492, 8, 0], [843, 503, 4, 1], [851, 499, 4, 1], [792, 509, 4, 1], [762, 516, 6, 0], [813, 519, 4, 0], [806, 527, 6, 0],
  [613, 552, 5, 2], [723, 576, 6, 0], [827, 576, 5, 0], [602, 600, 5, 1], [592, 595, 5, 0], [653, 536, 6, 0], [642, 545, 7, 0],
  [783, 534, 12, 0], [880, 470, 3, 1], [874, 477, 4, 0], [874, 570, 12, 0], [635, 524, 7, 0], [740, 524, 7, 0], [608, 582, 5, 0],
  [591, 580, 8, 0], [679, 580, 10, 0], [765, 487, 12, 0], [890, 575, 10, 0], [780, 517, 6, 0],
];

function drawSurface(ctx: CanvasRenderingContext2D) {
  const ox = 190;
  const oy = 421;
  const W = 750;
  const H = 210;
  let seed = 1337;
  const rnd = () => {
    seed = (seed * 1664525 + 1013904223) >>> 0;
    return seed / 4294967296;
  };
  const lattice = Array.from({ length: 4096 }, rnd);
  const noise = (x: number, y: number) => {
    const xi = Math.floor(x);
    const yi = Math.floor(y);
    const fx = x - xi;
    const fy = y - yi;
    const at = (a: number, b: number) => lattice[((a & 63) * 61 + (b & 63) * 17 * 37 + ((a * b) & 31)) & 4095];
    const sx = fx * fx * (3 - 2 * fx);
    const sy = fy * fy * (3 - 2 * fy);
    return (at(xi, yi) * (1 - sx) + at(xi + 1, yi) * sx) * (1 - sy) + (at(xi, yi + 1) * (1 - sx) + at(xi + 1, yi + 1) * sx) * sy;
  };
  const img = ctx.createImageData(W, H);
  const put = (x: number, y: number, r: number, g: number, b: number) => {
    const px = Math.round(x - ox);
    const py = Math.round(y - oy);
    if (px < 0 || py < 0 || px >= W || py >= H) return;
    const i = (py * W + px) * 4;
    img.data[i] = r;
    img.data[i + 1] = g;
    img.data[i + 2] = b;
    img.data[i + 3] = 255;
  };
  const locate = (x: number, y: number) => {
    const top = 431 + ((x - 338) * 21) / 539;
    const bottom = 590 + ((x - 195) * 31) / 730;
    const v = (y - top) / (bottom - top);
    const l = 338 - 143 * v;
    const r = 877 + 48 * v;
    return { v, u: (x - l) / (r - l) };
  };
  for (let y = oy; y < oy + H; y++) {
    for (let x = ox; x < ox + W; x++) {
      const { u, v } = locate(x, y);
      const edge = (noise(x / 9, 7) - 0.5) * 0.012;
      if (u < 0 || u > 1 || v < edge || v > 1 + edge) continue;
      const n = noise(u * 11, v * 6) * 0.4 + noise(u * 34 + 9, v * 20) * 0.25 + noise(x / 9, y / 1.6) * 0.35;
      const back = Math.max(0, 1 - Math.abs(v - 0.1) / 0.11) * 0.36;
      const t = Math.max(0, Math.min(1, (n - 0.5) * 0.95 + 0.54 + v * 0.28 - back));
      put(x, y, 8 + t * 180, 254, 0);
    }
  }
  const dots = (cx: number, cy: number, w: number, h: number, density: number) => {
    for (let y = Math.round(cy); y < cy + h; y += 2) {
      for (let x = Math.round((cx - w) / 2) * 2; x < cx + w; x += 2) {
        const p = locate(x, y);
        if (p.u > 0.005 && p.u < 0.995 && p.v > 0.02 && p.v < 0.985 && rnd() < density * (1 - Math.abs(x - cx) / (w + 2))) put(x, y, 255, 255, 255);
      }
    }
  };
  const bump = (cx: number, cy: number, w: number, level: number) => {
    const h = level === 3 ? 7 : level === 2 ? 5 : level === 1 ? 4 : 2.5;
    for (let dx = -w; dx <= w; dx++) {
      const k = Math.exp(-((dx * dx) / (w * w)) * 2.6);
      const hh = h * k + rnd() * 1.2;
      for (let dy = 0; dy < hh + 1; dy++) {
        const y = cy + 2 - hh + dy;
        const tone = k * (0.6 + rnd() * 0.4);
        if (level >= 3 && dy < hh * 0.5 && k > 0.5) put(cx + dx, y, 60 + rnd() * 50, 0, 130);
        else if (level >= 2 && k > 0.5 && dy < hh * 0.8) put(cx + dx, y, 15, 20 + rnd() * 60, 190 + rnd() * 40);
        else if (level >= 1 && k > 0.3 && rnd() < 0.9) put(cx + dx, y, 10, 85 + (1 - tone) * 110, 125 - (1 - tone) * 60);
        else if (rnd() < 0.8) put(cx + dx, y, 10, 155 + (1 - tone) * 80, 70 * tone);
      }
    }
    dots(cx, cy + 3, w + 2, level > 1 ? 8 : 6, 0.85);
  };
  for (let i = 0; i < 1300; i++) {
    const v = rnd();
    const u = rnd();
    const x = 338 - 143 * v + u * (539 + 191 * v);
    const y = 431 + ((x - 338) * 21) / 539 + v * 159;
    const w = 4 + rnd() * 10;
    if (rnd() < 0.26) {
      const bw = 2 + Math.floor(rnd() * 6);
      const deep = rnd() * rnd();
      for (let dx = -bw; dx <= bw; dx++) {
        const yy = y + Math.abs(dx) * 0.3;
        if (locate(x + dx, yy).v < 0.03 || locate(x + dx, yy).v > 0.97) continue;
        put(x + dx, yy, 30, 205 + rnd() * 40 - deep * 60, 10 + deep * 70);
        put(x + dx, yy + 1, 30, 240, 0);
      }
      dots(x, y + 2, bw + 2, 4, 0.7);
    } else {
      dots(x, y, w, 1 + rnd() * 3, 0.4);
    }
  }
  PEAKS.forEach((p) => bump(p[0], p[1], p[2], p[3]));
  ctx.putImageData(img, 0, 0);
}

function HeightMap() {
  const ref = useRef<HTMLCanvasElement>(null);
  useEffect(() => {
    const ctx = ref.current?.getContext("2d");
    if (ctx) drawSurface(ctx);
  }, []);
  const labels: [string, number, number][] = [
    ["Y", 265, 429], ["640", 175, 595], ["12.5", 177, 609], ["25", 177, 622], ["480", 361, 603], ["320", 548, 611], ["160", 738, 619],
    ["X", 938, 639], ["640", 964, 617], ["480", 945, 565], ["320", 929, 521], ["160", 916, 484], ["0", 907, 452], ["24.2", 866, 452],
    ["0", 868, 432], ["Z", 873, 548],
  ];
  return (
    <>
      <Surface ref={ref} width={750} height={210} />
      <Axes width="860" height="260" viewBox="160 401 860 260">
        <g stroke="#007800" strokeWidth="1.100" fill="none" shapeRendering="crispEdges">
          <path d="M294 418.500 L338 420 470 425 605 430 740 434.500 872 438.500" />
          <path d="M338 430.500 L470 436 605 440 740 445 876 450" />
          <path d="M338 420 L309 449.500 275 484.500 235 524.500 188 572.500 V598" />
          <path d="M338 431 L309 461 275 496 236 539 200 574 189 590" />
          <path d="M338.500 420 V431 M309 449 V462 M275 484 V497 M235 524 V539" />
          <path d="M309 449.500 L886 470.500 M275 484.500 L898 508 M235 524.500 L911 551.500 M188 572.500 L927 603.500" />
          <path d="M470.500 425 V437 M605 430 V441 M740 434 V446 M470 425 L420 502 369 580 M605 430 L582 497 553 587 M740 434 L739 595 M874 438 L931 615" />
          <path d="M871.500 421 V440" stroke="#124" strokeWidth="1.500" />
          <path d="M876.500 440 V453" strokeWidth="1.600" />
        </g>
        <path d="M872 423 L875 440" stroke="#2a1090" strokeWidth="2" />
        <path d="M872 432 L873 440" stroke="#10b0a0" strokeWidth="2" />
        <path d="M872 440 L874 449" stroke="#f08010" strokeWidth="2" />
        <path d="M298 417 H314 V419.500 H304Z" fill="#007000" />
        <path d="M921 615 L942 616 935 627Z" fill="#007800" />
        <g fontFamily="Liberation Sans, Arial, sans-serif" fontSize="13.500" fill="#007800">
          {labels.map(([t, x, y], i) => (
            <text key={i} x={x} y={y} textLength={t.length === 3 ? 21 : t.length === 4 ? 25 : undefined}>
              {t}
            </text>
          ))}
        </g>
      </Axes>
    </>
  );
}

/* ---------- sections ---------- */

function TopHeader() {
  return (
    <Header>
      <Logo>LEXT</Logo>
      <AdminTag>
        <Fit w={55} size={16.5} font={tahoma} color="#2b2b2b">ADMIN</Fit>
      </AdminTag>
      <TopTabs>
        <TopTab $active $w={207}>
          <BlueCamera />
          <TopTabLabel $r={46}><Fit w={81} size={20.5} font={tahoma} color="#111">Imaging</Fit></TopTabLabel>
        </TopTab>
        <TopTab $w={206}>
          <ChartIcon />
          <TopTabLabel $r={11}><Fit w={133} size={20.5} font={tahoma} color="#111">Measurement</Fit></TopTabLabel>
        </TopTab>
        <TopTab $w={205}>
          <ReportIcon />
          <TopTabLabel $r={45}><Fit w={76} size={20.5} font={tahoma} color="#111">Reports</Fit></TopTabLabel>
        </TopTab>
      </TopTabs>
      <Tools>
        {["table", "folder", "save", "print", "wrench", "help", "key"].map((k) => (
          <ToolButton key={k}>
            <ToolIcon kind={k} />
            {k !== "folder" && k !== "key" && <Caret />}
          </ToolButton>
        ))}
      </Tools>
      <WindowKeys>
        <WindowKey>
          <svg width="16" height="14" viewBox="0 0 16 14"><path d="M0 11 H16" stroke="#fff" strokeWidth="2.500" /></svg>
        </WindowKey>
        <WindowKey>
          <svg width="18" height="16" viewBox="0 0 18 16"><path d="M3 1 L15 15 M15 1 L3 15" stroke="#fff" strokeWidth="3" /></svg>
        </WindowKey>
      </WindowKeys>
    </Header>
  );
}

function DocTab({ label, w, h, bg, l, t, ml }: { label: string; w: number; h: number; bg: string; l: number; t: number; ml: number }) {
  const live = label === "Live";
  return (
    <TabShadow $ml={ml}>
      <TabEdge $w={w} $h={h}>
        <TabFace $w={w} $h={h} $bg={bg} $l={l} $t={t}>
          <Fit w={live ? 44 : 37} size={live ? 20.5 : 12.5} font={tahoma} color="#000">{label}</Fit>
        </TabFace>
      </TabEdge>
    </TabShadow>
  );
}

function ViewerArea() {
  return (
    <Viewer>
      <TabStrip>
        <DocTab label="Live" w={189} h={30} bg="#d2f7ff" l={40} t={3} ml={0} />
        <DocTab label="P_001" w={194} h={26} bg="#d3d3d3" l={28} t={5} ml={15} />
        <DocTab label="P_002" w={194} h={27} bg="#d3d3d3" l={29} t={6} ml={-18} />
        <DocTab label="P_003" w={190} h={31} bg="#c4d1d6" l={28} t={11} ml={-18} />
        <Pager>
          {["M8 15 L20 6 V24Z M5 6 h1.600 V24 H5Z", "M6 15 L20 6 V24Z", "M22 15 L9 6 V24Z", "M20 15 L8 6 V24Z M21.500 6 h1.600 V24 H21.500Z"].map((d) => (
            <PagerKey key={d}>
              <svg width="27" height="28" viewBox="0 0 28 30"><path d={d} fill="#9a9a9a" transform="translate(2.500 3.750) scale(.8 .75)" /></svg>
            </PagerKey>
          ))}
        </Pager>
      </TabStrip>
      <Frame>
        <Canvas3D><HeightMap /></Canvas3D>
      </Frame>
    </Viewer>
  );
}

function AccessoryBar() {
  return (
    <AccessoryColumn>
      <AccessoryShape>
        <AccessoryHead>
          <svg width="30" height="25" viewBox="0 0 30 25">
            <path d="M3 3 H30 V25 H3Z" fill="#2c3560" opacity=".7" />
            <rect x="1.500" y="1.500" width="25" height="20" fill="#414d82" stroke="#fff" strokeWidth="3" />
            <path d="M8 11.500 H20 M14 5.500 V17.500" stroke="#fff" strokeWidth="2" />
          </svg>
          <HeadCaption><Fit w={54} size={11.5} weight={600}>Accessory</Fit></HeadCaption>
        </AccessoryHead>
        <SideButton><FolderFrame fill="gray" w={29} shade={false} /></SideButton>
        <SideButton><FolderFrame fill="color" w={29} shade={false} /></SideButton>
        <SideButton><ConeIcon /></SideButton>
        <SideButton $kind="active"><ConeIcon layered /></SideButton>
        <Groove $top={0} $bottom={4} />
        <SideButton><FilmIcon /></SideButton>
        <Groove $top={1} $bottom={6} />
        <SideButton $kind="soft"><ExpandIcon /></SideButton>
        <SideButton $kind="soft"><FolderFrame fill="panel" w={28} shade={false} dim /></SideButton>
        <SideButton $kind="dim"><NoteIcon /></SideButton>
      </AccessoryShape>
    </AccessoryColumn>
  );
}

const CheckMark = () => (
  <svg width="14" height="14" viewBox="0 0 14 14"><path d="M2.500 7 L5.500 11.500 11.500 1.500" fill="none" stroke="#242a8c" strokeWidth="2.600" /></svg>
);

function MagnificationPanel() {
  return (
    <Panel $w={371} $h={203} $mb={3}>
      <PanelHead $w={371} $l={9}>
        <HeadPicture $w={119}><ObjectiveHead /></HeadPicture>
        <HeadTitle><Fit w={226} size={23}>Magnification setting</Fit></HeadTitle>
      </PanelHead>
      <Objectives>
        <Objective label="5x" band="#ff0000" />
        <Objective label="10x" band="#ffee00" />
        <Active><Objective label="20x" band="#00ff3c" big /></Active>
        <Objective label="50x" band="#00e6ff" />
        <Objective label="100x" band="#ffffff" />
        <Objective band="#4f4a48" dim />
      </Objectives>
      <ZoomLabels>
        {["1x", "2x", "4x", "6x", "8x"].map((t) => <Fit key={t} w={15} size={13}>{t}</Fit>)}
      </ZoomLabels>
      <ZoomRow>
        <svg width="22" height="22" viewBox="0 0 22 22">
          <circle cx="13" cy="8" r="6.800" fill="none" stroke="#c9c9c9" strokeWidth="1.600" />
          <path d="M13 4 V12 M9 8 H17" stroke="#ddd" strokeWidth="1.600" />
          <path d="M8.500 13 L1.500 20" stroke="#c9c9c9" strokeWidth="2.600" />
        </svg>
        <Spacer $w={8} />
        <Fit w={21} size={15.500}>1.0</Fit>
        <Spacer $w={6} />
        <Fit w={8} size={15.500}>x</Fit>
        <Spacer $w={9} />
        <SliderDrawing />
      </ZoomRow>
    </Panel>
  );
}

function AcquisitionPanel() {
  const values: [number, string, number][] = [[1, "455.450", 63], [2, "28.000", 53], [3, "427.450", 63], [4, "0.800", 43], [5, "36", 20]];
  return (
    <Panel $w={368} $h={601} $mb={4}>
      <PanelHead $w={369} $l={12}>
        <HeadPicture $w={143}><Camera w={44} tone="dark" /></HeadPicture>
        <HeadTitle><Fit w={198} size={23}>Acquisition setting</Fit></HeadTitle>
      </PanelHead>
      <Notebook>
        <NotebookTabs>
          <NormalTab><Fit w={52} size={14.500}>Normal</Fit></NormalTab>
          <FilmTab><Fit w={72} size={11.500}>Film thickness</Fit></FilmTab>
        </NotebookTabs>
        <NotebookBody>
          <ScanBox>
            <Dropdown>
              <svg width="24" height="24" viewBox="0 0 24 24">
                <path d="M1 22 Q14 20 13.500 8 L9 9 L18 1 L23 10 L19 8.500 Q20 23 8 23.500 Q4 24 1 22Z" fill="#9fcbe8" />
              </svg>
              <Fit w={33} size={15.500}>Fast</Fit>
              <DropCaret />
            </Dropdown>
            <CheckRow $mt={41}>
              <Check><CheckMark /></Check>
              <Spacer $w={4} />
              <svg width="23" height="21" viewBox="0 0 23 21">
                <path d="M0 14 L11 9 23 14 12 20Z" fill="#9db0bd" />
                <defs>
                  <linearGradient id="fire" x1="0" y1="0" x2="0" y2="1"><stop offset="0" stopColor="#e8d21c" /><stop offset=".6" stopColor="#e07018" /><stop offset="1" stopColor="#b03010" /></linearGradient>
                </defs>
                <path d="M10.500 0 Q14 5 18 15 Q15 18 11 18 Q6 18 4 15 Q8 6 10.500 0Z" fill="url(#fire)" />
              </svg>
              <Spacer $w={15} />
              <Fit w={42} size={15}>Color</Fit>
              <Spacer $w={49} />
              <Check />
              <Spacer $w={14} />
              <Fit w={28} size={15}>DIC</Fit>
            </CheckRow>
            <CheckRow $mt={17}>
              <Check><CheckMark /></Check>
              <Spacer $w={7} />
              <svg width="30" height="21" viewBox="0 0 30 21">
                <path d="M8.500 1 Q12 8 17 17 Q13 20.500 8 20.500 Q3 20.500 0 17 Q5 9 8.500 1Z" fill="url(#coneBlue)" />
                <path d="M19 1 H29 M19 20 H29 M24 4 V17" stroke="#c9c9c9" strokeWidth="1.300" />
                <path d="M24 2 l2 4 h-4Z M24 19 l2 -4 h-4Z" fill="#fff" />
              </svg>
              <Spacer $w={5} />
              <Fit w={56} size={15}>Manual</Fit>
            </CheckRow>
          </ScanBox>
          <Radios>
            <RadioRow><Radio $on /><Fit w={135} size={14.500}>Top/Bottom setting</Fit></RadioRow>
            <RadioRow><Radio /><Fit w={110} size={15.500}>Range setting</Fit></RadioRow>
          </Radios>
          <Measures>
            <Gauge><GaugeMark /></Gauge>
            <Lead $row={1} />
            <Lead $row={3} />
            <KeyButton $row={1}><Fit w={28} size={14.500} color="#d4d4d4">Top</Fit></KeyButton>
            <Cell $row={2} $col={3} $l={12}><Fit w={60} size={14.500}>Distance</Fit></Cell>
            <KeyButton $row={3}><Fit w={52} size={14.500} color="#d4d4d4">Bottom</Fit></KeyButton>
            <Cell $row={4} $col={3} $l={15}><Fit w={35} size={14.500}>Pitch</Fit></Cell>
            <Cell $row={5} $col={3} $l={14} $b={2}><Fit w={32} size={14.500}>Step</Fit></Cell>
            {values.map(([row, text, w]) => (
              <Cell key={row} $row={row} $col={5} $b={row === 2 || row === 5 ? 2 : 1}><Fit w={w} size={16.500}>{text}</Fit></Cell>
            ))}
          </Measures>
        </NotebookBody>
      </Notebook>
    </Panel>
  );
}

function ImageInfo() {
  const rows: [string, number][] = [["Magnification", 90], ["Imaging", 57], ["Laser", 38], ["Color", 37]];
  return (
    <InfoPanel>
      <InfoTabs>
        <MapTab><Fit w={67} size={12.500} font={tahoma} color="#6a6a6a">Map screen</Fit></MapTab>
        <InfoTab><Fit w={66} size={12.500} font={tahoma} color="#000">Image Info</Fit></InfoTab>
      </InfoTabs>
      <InfoBody>
        <TreeArea>
          <TreeList>
            {rows.map(([t, w]) => (
              <TreeRow key={t}>
                <TreeGlyph>
                  <svg width="6" height="9" viewBox="0 0 6 9"><path d="M.5 .8 V8.200 L5 4.500Z" fill="none" stroke="#aaa" /></svg>
                </TreeGlyph>
                <Fit w={w} size={14} font={tahoma} color="#000">{t}</Fit>
              </TreeRow>
            ))}
          </TreeList>
          <VTrack>
            <ScrollKey><Arrow d={UP} /></ScrollKey>
          </VTrack>
          <HTrack>
            <ScrollKey $flat><Arrow d={LEFT} /></ScrollKey>
            <ScrollKey $flat><Arrow d={RIGHT} /></ScrollKey>
          </HTrack>
          <ScrollKey><Arrow d={DOWN} /></ScrollKey>
        </TreeArea>
        <CommentRow>
          <Fit w={53} size={12} font={tahoma} color="#000">Comment</Fit>
          <SetButton><Fit w={83} size={12.500} font={tahoma} color="#000">Set conditions</Fit></SetButton>
        </CommentRow>
        <CommentBox>
          <VTrack $h={85}>
            <ScrollKey><Arrow d={UP} /></ScrollKey>
            <ScrollKey><Arrow d={DOWN} /></ScrollKey>
          </VTrack>
        </CommentBox>
      </InfoBody>
    </InfoPanel>
  );
}

function Advanced() {
  const rows: [string, number][] = [["Auto save", 61], ["Laser observation", 109], ["Color observation", 110], ["Data acquisition", 100], ["Auto focus", 67], ["Microscope", 72]];
  return (
    <AdvancedPanel>
      <PanelHead $w={358} $l={12}>
        <HeadPicture $w={58}><Camera w={44} tone="dark" /></HeadPicture>
        <HeadTitle><Fit w={184} size={23}>Advanced setting</Fit></HeadTitle>
        <CloseKey>
          <svg width="14" height="14" viewBox="0 0 14 14"><path d="M1.500 1.500 L12.500 12.500 M12.500 1.500 L1.500 12.500" stroke="#fff" strokeWidth="2" /></svg>
        </CloseKey>
      </PanelHead>
      <AdvancedList>
        {rows.map(([t, w]) => (
          <AdvancedRow key={t}><Tri /><Fit w={w} size={13}>{t}</Fit></AdvancedRow>
        ))}
      </AdvancedList>
    </AdvancedPanel>
  );
}

export default function App() {
  return (
    <Screen>
      <GlobalStyle />
      <TopHeader />
      <Main>
        <Rail>
          <RailTop><Fit w={254} size={24} font={tahoma} vertical>Laser microscope</Fit></RailTop>
          <RailBottom>
            <RoughTab><RoughFace><Fit w={76} size={12} font={tahoma} vertical>Roughness</Fit></RoughFace></RoughTab>
          </RailBottom>
        </Rail>
        <ViewerArea />
        <AccessoryBar />
        <Right>
          <ModeBar>
            <Mode $on><MicroscopeIcon /></Mode>
            <Mode><SettingsWindowIcon /></Mode>
            <Mode><PagesIcon /></Mode>
            <Mode><FolderGearIcon /></Mode>
          </ModeBar>
          <PresetBar>
            <Preset><FolderFrame fill="color" /></Preset>
            <Preset><FolderFrame fill="gray" /></Preset>
            <Preset $l={19}><FolderFrame fill="two" /></Preset>
            <Preset $off $l={30}><FolderFrame fill="wrench" /><PresetCaret /></Preset>
          </PresetBar>
          <Columns>
            <LeftColumn>
              <MagnificationPanel />
              <AcquisitionPanel />
              <AcquireButton>
                <Camera w={68} />
                <AcquireLabel><Fit w={158} size={30} color="#000">Acquisition</Fit></AcquireLabel>
              </AcquireButton>
            </LeftColumn>
            <RightColumn>
              <ImageInfo />
              <Advanced />
            </RightColumn>
          </Columns>
        </Right>
      </Main>
      <Status>
        <StatusCell $w={151}>
          <StatusSquare />
          <Fit w={84} size={12.500} font={tahoma}>646 x 646 µm</Fit>
        </StatusCell>
        {[118, 141, 116, 120, 113].map((w, i) => <StatusCell key={i} $w={w} />)}
      </Status>
    </Screen>
  );
}
